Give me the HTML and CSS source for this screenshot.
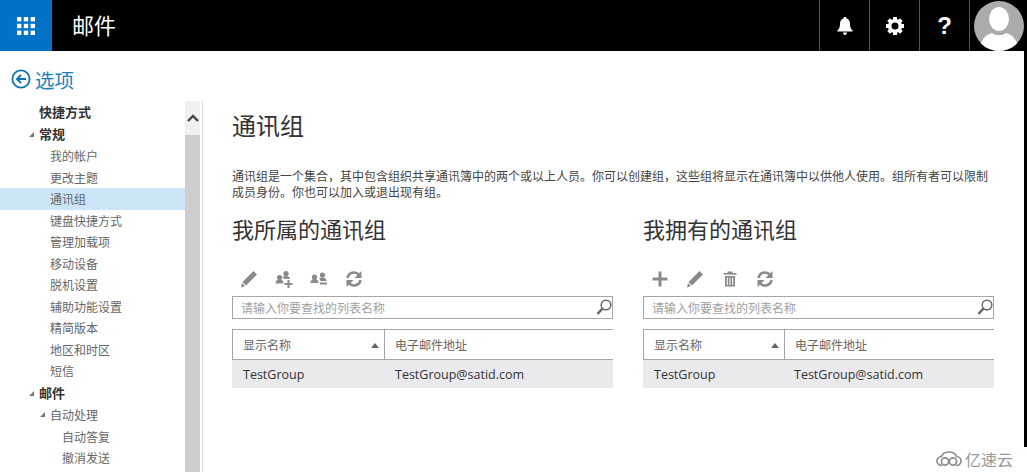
FILE: index.html
```html
<!DOCTYPE html>
<html lang="zh-CN">
<head>
  <meta charset="UTF-8">
  <title>邮件 - 通讯组</title>
  <link rel="stylesheet" href="styles.css">
</head>
<body>
  <div class="page">
    <header class="topbar">
      <div class="app-launcher">
        <svg width="18" height="18" viewBox="0 0 18 18" fill="#fff">
          <rect x="0" y="0" width="4.4" height="4.4"/><rect x="6.8" y="0" width="4.4" height="4.4"/><rect x="13.6" y="0" width="4.4" height="4.4"/>
          <rect x="0" y="6.8" width="4.4" height="4.4"/><rect x="6.8" y="6.8" width="4.4" height="4.4"/><rect x="13.6" y="6.8" width="4.4" height="4.4"/>
          <rect x="0" y="13.6" width="4.4" height="4.4"/><rect x="6.8" y="13.6" width="4.4" height="4.4"/><rect x="13.6" y="13.6" width="4.4" height="4.4"/>
        </svg>
      </div>
      <div class="app-title">邮件</div>
      <div class="top-btn">
        <svg width="16" height="18" viewBox="0 0 16 18" fill="#fff"><path d="M8 0c1 0 1.600.7 1.600 1.500C12 2.200 13 4.200 13 7c0 3 .8 5 2.600 6.600v1H.4v-1C2.200 12 3 10 3 7c0-2.800 1-4.800 3.400-5.500C6.400.7 7 0 8 0z"/><path d="M6 15.600h4C10 17 9.200 18 8 18s-2-1-2-2.400z"/></svg>
      </div>
      <div class="top-btn">
        <svg width="18" height="18" viewBox="0 0 18 18"><circle cx="9" cy="9" r="5.300" fill="none" stroke="#fff" stroke-width="3.600"/><g fill="#fff"><rect x="7" y="0" width="4" height="4"/><rect x="7" y="14" width="4" height="4"/><rect x="0" y="7" width="4" height="4"/><rect x="14" y="7" width="4" height="4"/><rect x="7" y="0" width="4" height="4" transform="rotate(45 9 9)"/><rect x="7" y="14" width="4" height="4" transform="rotate(45 9 9)"/><rect x="0" y="7" width="4" height="4" transform="rotate(45 9 9)"/><rect x="14" y="7" width="4" height="4" transform="rotate(45 9 9)"/></g></svg>
      </div>
      <div class="top-btn help">?</div>
      <div class="avatar-cell">
        <svg class="avatar" width="50" height="50" viewBox="0 0 50 50">
          <defs><clipPath id="av"><circle cx="25" cy="25" r="25"/></clipPath></defs>
          <circle cx="25" cy="25" r="25" fill="#ababab"/>
          <g clip-path="url(#av)" fill="#fff"><ellipse cx="25" cy="18" rx="10" ry="12"/><path d="M6 50c0-11 5-16 12-18 4 3 10 3 14 0 7 2 12 7 12 18z"/></g>
        </svg>
      </div>
    </header>

    <div class="options-head">
      <svg width="20" height="20" viewBox="0 0 20 20" fill="none" stroke="#0e72b5"><circle cx="10" cy="10" r="8.600" stroke-width="1.800"/><path d="M15 10H6.500M10 6l-4 4 4 4" stroke-width="2"/></svg>
      <span class="options-title">选项</span>
    </div>

    <div class="main">
      <aside class="sidebar">
        <nav class="nav">
          <a class="nav-item bold lv0">快捷方式</a>
          <a class="nav-item bold lv0 open">常规</a>
          <a class="nav-item lv1">我的帐户</a>
          <a class="nav-item lv1">更改主题</a>
          <a class="nav-item lv1 active">通讯组</a>
          <a class="nav-item lv1">键盘快捷方式</a>
          <a class="nav-item lv1">管理加载项</a>
          <a class="nav-item lv1">移动设备</a>
          <a class="nav-item lv1">脱机设置</a>
          <a class="nav-item lv1">辅助功能设置</a>
          <a class="nav-item lv1">精简版本</a>
          <a class="nav-item lv1">地区和时区</a>
          <a class="nav-item lv1">短信</a>
          <a class="nav-item bold lv0 open section">邮件</a>
          <a class="nav-item lv1 open">自动处理</a>
          <a class="nav-item lv2">自动答复</a>
          <a class="nav-item lv2">撤消发送</a>
        </nav>
        <div class="scrollbar">
          <div class="scroll-btn">
            <svg width="12" height="8" viewBox="0 0 12 8" fill="none" stroke="#444" stroke-width="2.400"><path d="M1 7l5-5 5 5"/></svg>
          </div>
          <div class="scroll-thumb"></div>
        </div>
      </aside>

      <main class="content">
        <h1 class="page-title">通讯组</h1>
        <p class="intro">通讯组是一个集合，其中包含组织共享通讯簿中的两个或以上人员。你可以创建组，这些组将显示在通讯簿中以供他人使用。组所有者可以限制成员身份。你也可以加入或退出现有组。</p>
        <div class="columns">
          <section class="group">
            <h2 class="group-title">我所属的通讯组</h2>
            <div class="toolbar">
              <svg class="tool" width="18" height="18" viewBox="0 0 18 18" fill="#8a8a8a"><path d="M13.500 1l3.500 3.500L6 15.500 2.500 12z"/><path d="M2 13l3 3-4 1.500z"/></svg>
              <svg class="tool" width="18" height="18" viewBox="0 0 18 18" fill="#8a8a8a"><circle cx="4.500" cy="7.500" r="2.600"/><circle cx="11" cy="3.500" r="2.600"/><path d="M.5 13.500c0-2.500 1.500-4 4-4s4 1.500 4 4zM7 7.500c.8-1 2.200-1.600 4-1.600 2.500 0 4 1.200 4 3.100h-5.500c-.7-.7-1.500-1.200-2.500-1.500z"/><path d="M12.500 10h2v3h3v2h-3v3h-2v-3h-3v-2h3z"/></svg>
              <svg class="tool" width="18" height="18" viewBox="0 0 18 18" fill="#8a8a8a"><circle cx="4.500" cy="7" r="2.600"/><circle cx="12.500" cy="5" r="2.600"/><path d="M.5 13c0-2.500 1.500-4 4-4s4 1.500 4 4zM9 8.600c.8-.7 2-1.200 3.500-1.200 2.500 0 4 1.300 4 3.600h-6c-.3-1-.8-1.800-1.500-2.400z"/><rect x="10" y="12.500" width="7" height="2"/></svg>
              <svg class="tool" width="18" height="18" viewBox="0 0 18 18" fill="none" stroke="#8a8a8a" stroke-width="2.600"><path d="M2.500 8A6.500 6.500 0 0 1 14 5"/><path d="M15.500 10A6.500 6.500 0 0 1 4 13"/><path d="M16.500 1v7h-7z" fill="#8a8a8a" stroke="none"/><path d="M1.500 17v-7h7z" fill="#8a8a8a" stroke="none"/></svg>
            </div>
            <div class="search">
              <span class="search-text">请输入你要查找的列表名称</span>
              <svg width="16" height="17" viewBox="0 0 16 17" fill="none" stroke="#666"><circle cx="10" cy="6" r="4.800" stroke-width="1.500"/><path d="M6.500 9.500 1.500 15" stroke-width="2.600"/></svg>
            </div>
            <div class="table">
              <div class="thead">
                <div class="th name">显示名称<span class="sort"></span></div>
                <div class="th">电子邮件地址</div>
              </div>
              <div class="tr">
                <div class="td name">TestGroup</div>
                <div class="td">TestGroup@satid.com</div>
              </div>
            </div>
          </section>

          <section class="group owned">
            <h2 class="group-title">我拥有的通讯组</h2>
            <div class="toolbar">
              <svg class="tool" width="18" height="18" viewBox="0 0 18 18" fill="#8a8a8a"><rect x="7.500" y="1.500" width="3" height="15"/><rect x="1.500" y="7.500" width="15" height="3"/></svg>
              <svg class="tool" width="18" height="18" viewBox="0 0 18 18" fill="#8a8a8a"><path d="M13.500 1l3.500 3.500L6 15.500 2.500 12z"/><path d="M2 13l3 3-4 1.500z"/></svg>
              <svg class="tool" width="18" height="18" viewBox="0 0 18 18" fill="#8a8a8a"><rect x="6.500" y="1.500" width="5" height="1.500"/><rect x="2.500" y="3" width="13" height="1.600"/><path d="M4 6h10v10.500H4zM5.800 7.500v7.500h1V7.500zM8.500 7.500v7.500h1V7.500zM11.200 7.500v7.500h1V7.500z" fill-rule="evenodd"/></svg>
              <svg class="tool" width="18" height="18" viewBox="0 0 18 18" fill="none" stroke="#8a8a8a" stroke-width="2.600"><path d="M2.500 8A6.500 6.500 0 0 1 14 5"/><path d="M15.500 10A6.500 6.500 0 0 1 4 13"/><path d="M16.500 1v7h-7z" fill="#8a8a8a" stroke="none"/><path d="M1.500 17v-7h7z" fill="#8a8a8a" stroke="none"/></svg>
            </div>
            <div class="search">
              <span class="search-text">请输入你要查找的列表名称</span>
              <svg width="16" height="17" viewBox="0 0 16 17" fill="none" stroke="#666"><circle cx="10" cy="6" r="4.800" stroke-width="1.500"/><path d="M6.500 9.500 1.500 15" stroke-width="2.600"/></svg>
            </div>
            <div class="table">
              <div class="thead">
                <div class="th name">显示名称<span class="sort"></span></div>
                <div class="th">电子邮件地址</div>
              </div>
              <div class="tr">
                <div class="td name">TestGroup</div>
                <div class="td">TestGroup@satid.com</div>
              </div>
            </div>
          </section>
        </div>
      </main>
    </div>
    <div class="edge"></div>
    <div class="watermark">
      <svg width="26" height="16" viewBox="0 0 26 16" fill="none" stroke="#8e8e8e" stroke-width="1.700"><path d="M6 14.500C3 14.500 1 12.500 1 10s2-4.500 4.500-4.500C6.500 2.800 9.500 1 13 1s6.500 1.800 7.500 4.500C23 5.500 25 7.500 25 10s-2 4.500-5 4.500"/><circle cx="9" cy="10.500" r="3.600"/><circle cx="17" cy="10.500" r="3.600"/></svg>
      <span>亿速云</span>
    </div>
  </div>
</body>
</html>
```

FILE: styles.css
```css
html, body {
  margin: 0;
  padding: 0;
  background: #fff;
}
body {
  width: 1027px;
  height: 472px;
  overflow: hidden;
  font-family: "Noto Sans CJK SC", "Liberation Sans", sans-serif;
  color: #333;
}
.page {
  position: relative;
  width: 1027px;
  height: 472px;
  overflow: hidden;
}

/* TOP BAR */
.topbar {
  display: flex;
  height: 51px;
  background: #000;
}
.app-launcher {
  width: 52px;
  background: #0072c6;
  display: flex;
  align-items: center;
  justify-content: center;
}
.app-title {
  flex: 1;
  padding-left: 20px;
  color: #fff;
  font-size: 22px;
  line-height: 49px;
}
.top-btn {
  width: 49px;
  border-left: 1px solid #555;
  display: flex;
  align-items: center;
  justify-content: center;
  color: #fff;
}
.help {
  font-family: "Liberation Sans", sans-serif;
  font-weight: bold;
  font-size: 24px;
}
.avatar-cell {
  width: 58px;
  border-left: 1px solid #555;
  display: flex;
  align-items: center;
  padding-left: 4px;
  box-sizing: border-box;
}

/* OPTIONS HEADER */
.options-head {
  display: flex;
  align-items: center;
  gap: 4px;
  height: 44px;
  padding: 6px 0 0 11px;
}
.options-title {
  font-size: 19.500px;
  color: #1c7fb8;
}

.main {
  display: flex;
  height: 371px;
}

/* SIDEBAR */
.sidebar {
  width: 202px;
  flex: none;
  display: flex;
  border-right: 1px solid #ddd;
}
.nav {
  flex: 1;
  padding-top: 1px;
}
.nav-item {
  display: block;
  position: relative;
  height: 21.500px;
  line-height: 21.500px;
  font-size: 12px;
  color: #666;
}
.nav-item.bold {
  font-weight: bold;
  font-size: 13px;
  line-height: 20px;
  color: #333;
}
.nav-item.section { margin-top: 1px; }
.nav-item.lv0 { padding-left: 39px; }
.nav-item.lv1 { padding-left: 50px; }
.nav-item.lv2 { padding-left: 62px; }
.nav-item.active { background: #cde6f7; }
.nav-item.open::before {
  content: "";
  position: absolute;
  top: 8px;
  width: 0;
  height: 0;
  border-style: solid;
  border-width: 0 0 5px 5px;
  border-color: transparent transparent #777 transparent;
}
.nav-item.lv0.open::before { left: 29px; }
.nav-item.lv1.open::before { left: 40px; }
.scrollbar {
  width: 15px;
  margin-right: 2px;
  background: #cdcdcd;
  flex: none;
}
.scroll-btn {
  height: 34px;
  background: #f0f0f0;
  display: flex;
  align-items: center;
  justify-content: center;
}

/* CONTENT */
.content {
  flex: 1;
  padding: 0 33px 0 29px;
  min-width: 0;
}
.page-title {
  margin: 7px 0 0;
  font-size: 24px;
  font-weight: normal;
  line-height: 34px;
  color: #333;
}
.intro {
  margin: 26px 0 0;
  font-size: 12px;
  line-height: 16px;
  color: #444;
}
.columns {
  display: flex;
  gap: 30px;
  margin-top: 12px;
}
.group {
  width: 381px;
  flex: none;
}
.group.owned {
  width: 351px;
}
.group-title {
  margin: 0;
  font-size: 22px;
  font-weight: normal;
  line-height: 32px;
  color: #333;
}
.toolbar {
  display: flex;
  gap: 17px;
  margin-top: 26px;
  padding-left: 8px;
  height: 18px;
}
.tool { flex: none; }
.search {
  display: flex;
  align-items: center;
  justify-content: space-between;
  height: 21px;
  margin-top: 8px;
  padding: 0 0 0 8px;
  border: 1px solid #a6a6a6;
}
.search-text {
  font-size: 12px;
  color: #a0a0a0;
}
.table {
  margin-top: 10px;
}
.thead {
  display: flex;
  height: 29px;
  border-top: 1px solid #a6a6a6;
  border-bottom: 1px solid #a6a6a6;
}
.th {
  position: relative;
  flex: 1;
  font-size: 12px;
  line-height: 29px;
  padding-left: 10px;
  color: #666;
}
.th.name {
  flex: none;
  width: 141px;
  border-left: 1px solid #a6a6a6;
  border-right: 1px solid #a6a6a6;
}
.sort {
  position: absolute;
  right: 5px;
  top: 13px;
  width: 0;
  height: 0;
  border-style: solid;
  border-width: 0 4px 5px 4px;
  border-color: transparent transparent #666 transparent;
}
.tr {
  display: flex;
  height: 28px;
  background: #eaeaec;
  line-height: 30px;
  font-size: 12.500px;
  font-family: "Open Sans", "Liberation Sans", sans-serif;
  color: #333;
}
.td { padding-left: 11px; }
.td.name {
  width: 141px;
  flex: none;
}
.owned .th.name {
  width: 130px;
}
.owned .td.name {
  width: 129px;
}

/* overlay bits of the screenshot */
.edge {
  position: absolute;
  right: 0;
  top: 0;
  width: 3px;
  height: 447px;
  background: #000;
}
.watermark {
  position: absolute;
  right: 14px;
  bottom: 1px;
  display: flex;
  align-items: center;
  gap: 3px;
  font-size: 16px;
  color: #999;
}
```
